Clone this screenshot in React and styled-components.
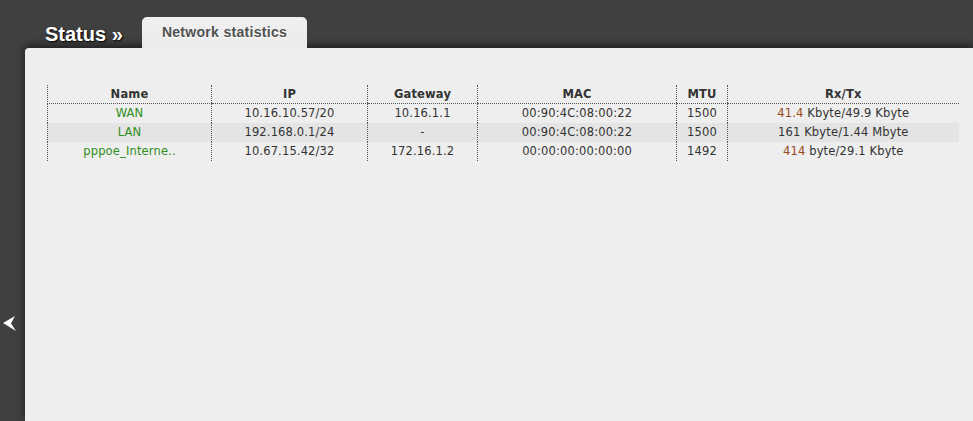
import React from "react";
import styled, { createGlobalStyle } from "styled-components";

const Global = createGlobalStyle`
  html, body { margin: 0; padding: 0; background: #404040; overflow: hidden; }
  body { font-family: "DejaVu Sans", Verdana, sans-serif; }
`;

const Page = styled.div`
  width: 973px;
  height: 421px;
  display: flex;
  flex-direction: column;
  background: #404040;
`;

const TopBar = styled.div`
  height: 48px;
  display: flex;
  align-items: flex-end;
  padding-left: 45px;
  box-sizing: border-box;
  position: relative;
  z-index: 2;
`;

const Title = styled.div`
  font-family: "Liberation Sans", Arial, sans-serif;
  font-weight: bold;
  font-size: 20px;
  color: #ffffff;
  text-shadow: 1px 1px 2px #000;
  line-height: 20px;
  padding-bottom: 4px;
  width: 97px;
  white-space: nowrap;
`;

const Tab = styled.div`
  width: 165px;
  height: 31px;
  box-sizing: border-box;
  background: linear-gradient(#f0f0f0, #ebebeb);
  border-radius: 5px 5px 0 0;
  display: flex;
  justify-content: center;
  align-items: center;
  padding-bottom: 2px;
  font-family: "Liberation Sans", Arial, sans-serif;
  font-weight: bold;
  font-size: 14px;
  letter-spacing: 0.3px;
  color: #505050;
  text-shadow: 0 1px 0 #fff;
`;

const Body = styled.div`
  flex: 1;
  display: flex;
  min-height: 0;
`;

const Sidebar = styled.div`
  width: 25px;
  flex-shrink: 0;
  padding-top: 268px;
  box-sizing: border-box;
  display: flex;
  justify-content: flex-start;
  padding-left: 3px;
`;

const Panel = styled.div`
  flex: 1;
  background: #eeeeee;
  border-radius: 4px 0 0 0;
  box-shadow: 0 -2px 8px rgba(0, 0, 0, 0.6);
  padding: 37px 15px 0 22px;
  box-sizing: border-box;
`;

const Table = styled.table`
  width: 911px;
  border-collapse: collapse;
  table-layout: fixed;
  font-size: 11.5px;
  letter-spacing: 0.15px;
  color: #333;
`;

const Th = styled.th`
  height: 18px;
  padding: 0;
  font-weight: bold;
  font-size: 11.5px;
  color: #333;
  text-align: center;
  border-left: 1px dotted #555;
  border-bottom: 1px dotted #555;
  vertical-align: middle;
  line-height: 17px;
`;

const Tr = styled.tr`
  background: ${(p) => (p.$shade ? "#e4e4e4" : "transparent")};
`;

const Td = styled.td`
  height: 19px;
  padding: 0;
  text-align: center;
  border-left: 1px dotted #555;
  line-height: 19px;
  white-space: nowrap;
  color: ${(p) => (p.$green ? "#2f8d1c" : "#333")};
`;

const Num = styled.span`
  color: ${(p) => (p.$hot ? "#9a4a18" : "inherit")};
`;

const Arrow = () => (
  <svg width="14" height="16" viewBox="0 0 14 16">
    <polygon points="12,0 0,7 13,15 8,7.5" fill="#ffffff" />
  </svg>
);

const rows = [
  { name: "WAN", ip: "10.16.10.57/20", gw: "10.16.1.1", mac: "00:90:4C:08:00:22", mtu: "1500", rx: "41.4", rest: " Kbyte/49.9 Kbyte", hot: true },
  { name: "LAN", ip: "192.168.0.1/24", gw: "-", mac: "00:90:4C:08:00:22", mtu: "1500", rx: "161", rest: " Kbyte/1.44 Mbyte", hot: false },
  { name: "pppoe_Interne..", ip: "10.67.15.42/32", gw: "172.16.1.2", mac: "00:00:00:00:00:00", mtu: "1492", rx: "414", rest: " byte/29.1 Kbyte", hot: true },
];

export default function App() {
  return (
    <Page>
      <Global />
      <TopBar>
        <Title>Status »</Title>
        <Tab>Network statistics</Tab>
      </TopBar>
      <Body>
        <Sidebar>
          <div><Arrow /></div>
        </Sidebar>
        <Panel>
          <Table>
            <colgroup>
              <col style={{ width: 164 }} />
              <col style={{ width: 156 }} />
              <col style={{ width: 110 }} />
              <col style={{ width: 199 }} />
              <col style={{ width: 51 }} />
              <col style={{ width: 231 }} />
            </colgroup>
            <thead>
              <tr>
                <Th>Name</Th>
                <Th>IP</Th>
                <Th>Gateway</Th>
                <Th>MAC</Th>
                <Th>MTU</Th>
                <Th>Rx/Tx</Th>
              </tr>
            </thead>
            <tbody>
              {rows.map((r, i) => (
                <Tr key={r.name} $shade={i === 1}>
                  <Td $green>{r.name}</Td>
                  <Td>{r.ip}</Td>
                  <Td>{r.gw}</Td>
                  <Td>{r.mac}</Td>
                  <Td>{r.mtu}</Td>
                  <Td>
                    <Num $hot={r.hot}>{r.rx}</Num>
                    {r.rest}
                  </Td>
                </Tr>
              ))}
            </tbody>
          </Table>
        </Panel>
      </Body>
    </Page>
  );
}
